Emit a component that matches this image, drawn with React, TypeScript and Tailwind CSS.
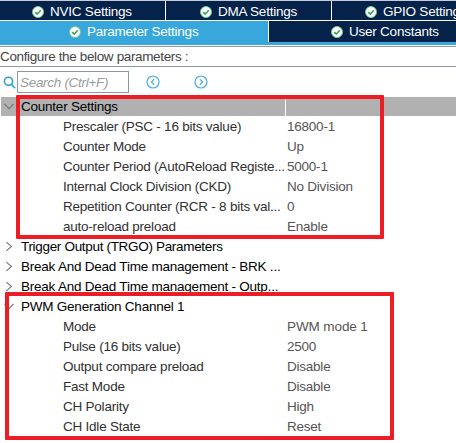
import React from "react";

type Param = { name: string; value: string; wide?: boolean };

const counterParams: Param[] = [
  { name: "Prescaler (PSC - 16 bits value)", value: "16800-1" },
  { name: "Counter Mode", value: "Up" },
  { name: "Counter Period (AutoReload Registe...", value: "5000-1" },
  { name: "Internal Clock Division (CKD)", value: "No Division" },
  { name: "Repetition Counter (RCR - 8 bits val...", value: "0" },
  { name: "auto-reload preload", value: "Enable" },
];

const pwmParams: Param[] = [
  { name: "Mode", value: "PWM mode 1", wide: true },
  { name: "Pulse (16 bits value)", value: "2500" },
  { name: "Output compare preload", value: "Disable" },
  { name: "Fast Mode", value: "Disable" },
  { name: "CH Polarity", value: "High" },
  { name: "CH Idle State", value: "Reset" },
];

function Check() {
  return (
    <svg className="mr-[6px] h-3 w-3 shrink-0" viewBox="0 0 12 12" fill="none">
      <circle cx="6" cy="6" r="5.5" fill="#fff" stroke="#74c38c" strokeWidth="1" />
      <path d="M3.2 6.1 5.3 8.1 8.8 4.3" stroke="#35a65a" strokeWidth="1.5" />
    </svg>
  );
}

function Nav({ right = false }: { right?: boolean }) {
  return (
    <svg className="h-[14px] w-[14px] shrink-0" viewBox="0 0 14 14" fill="none" stroke="#45acdc">
      <circle cx="7" cy="7" r="6" strokeWidth="1.2" />
      <path d={right ? "M5.8 4.2 8.6 7 5.8 9.8" : "M8.2 4.2 5.4 7 8.2 9.8"} strokeWidth="1.2" />
    </svg>
  );
}

function Group({ title, open = false, tight = false }: { title: string; open?: boolean; tight?: boolean }) {
  return (
    <div className="flex h-5 items-center pl-1 text-black">
      <svg className="h-3 w-[11px] shrink-0" viewBox="0 0 11 12" fill="none" stroke="#777" strokeWidth="1.1">
        <path d={open ? "M.4 3.8 5 8.6 9.6 3.8" : "M2.3 2.2 7.5 6.5 2.3 10.8"} />
      </svg>
      <span className={tight ? "ml-[6px] pt-0.5 tracking-[-0.32px]" : "ml-[6px] pt-0.5"}>{title}</span>
    </div>
  );
}

function Row({ name, value, wide }: Param) {
  return (
    <div className="flex h-5 items-center pt-0.5">
      <span className="w-[287px] shrink-0 pl-[63px] text-[#303030]">{name}</span>
      <span className={wide ? "tracking-[-0.1px] text-[#555]" : "text-[#555]"}>{value}</span>
    </div>
  );
}

export default function App() {
  return (
    <div className="h-[443px] w-[456px] overflow-hidden bg-white font-['Liberation_Sans',Arial,sans-serif] text-[13.5px] leading-5 tracking-[-0.23px] whitespace-pre">
      <div className="relative">
        <div className="flex h-5 border-t border-[#c8ccd4] bg-[#04224a] text-white">
          <div className="flex w-[166px] shrink-0 items-center border-r border-white pt-0.5 pl-8"><Check />NVIC Settings</div>
          <div className="flex w-[166px] shrink-0 items-center border-r border-white pt-0.5 pl-[34px]"><Check />DMA Settings</div>
          <div className="flex w-[124px] shrink-0 items-center overflow-hidden pt-0.5 pl-[33px]"><Check />GPIO Settings</div>
        </div>
        <div className="flex h-[22px] border-t border-white bg-[#04224a] text-white">
          <div className="flex w-[269px] shrink-0 items-center border-r border-white bg-[#38a7dc] pl-[69px]"><Check />Parameter Settings</div>
          <div className="flex flex-1 items-center pl-[62px]"><Check />User Constants</div>
        </div>
        <div className="h-[3px] bg-[#38a7dc]" />
        <div className="mt-px h-[21px] border-y border-[#9198a0] tracking-[-0.36px] text-[#444]">Configure the below parameters :</div>
        <div className="flex h-[30px] items-center pl-[3px]">
          <svg className="h-[13px] w-[13px]" viewBox="0 0 13 13" fill="none" stroke="#32a0d4" strokeWidth="1.6">
            <circle cx="5.5" cy="5.3" r="4.1" />
            <path d="m8.5 8.4 3.6 3.8" />
          </svg>
          <div className="ml-px flex h-[22px] w-28 items-center border border-[#8b97a3] pt-px pl-0.5 tracking-[-0.3px] text-[#9b9b9b] italic">Search (Ctrl+F)</div>
          <div className="ml-[17px] flex gap-[34px]"><Nav /><Nav right /></div>
        </div>
        <div className="ml-px flex h-[19px] bg-[#b1b1b1]">
          <div className="-mt-px -ml-px h-5 w-[285px]"><Group title="Counter Settings" open /></div>
          <div className="w-px bg-white" />
        </div>
        {counterParams.map((p) => <Row key={p.name} {...p} />)}
        <Group title="Trigger Output (TRGO) Parameters" tight />
        <Group title="Break And Dead Time management - BRK ..." />
        <Group title="Break And Dead Time management - Outp..." />
        <Group title="PWM Generation Channel 1" open />
        {pwmParams.map((p) => <Row key={p.name} {...p} />)}
        <div className="absolute top-[95px] left-[16px] h-[144px] w-[368px] rounded-[1px] border-4 border-[#ee1c25]" />
        <div className="absolute top-[292px] left-[5px] h-[148px] w-[389px] rounded-[1px] border-4 border-[#ee1c25]" />
      </div>
    </div>
  );
}
